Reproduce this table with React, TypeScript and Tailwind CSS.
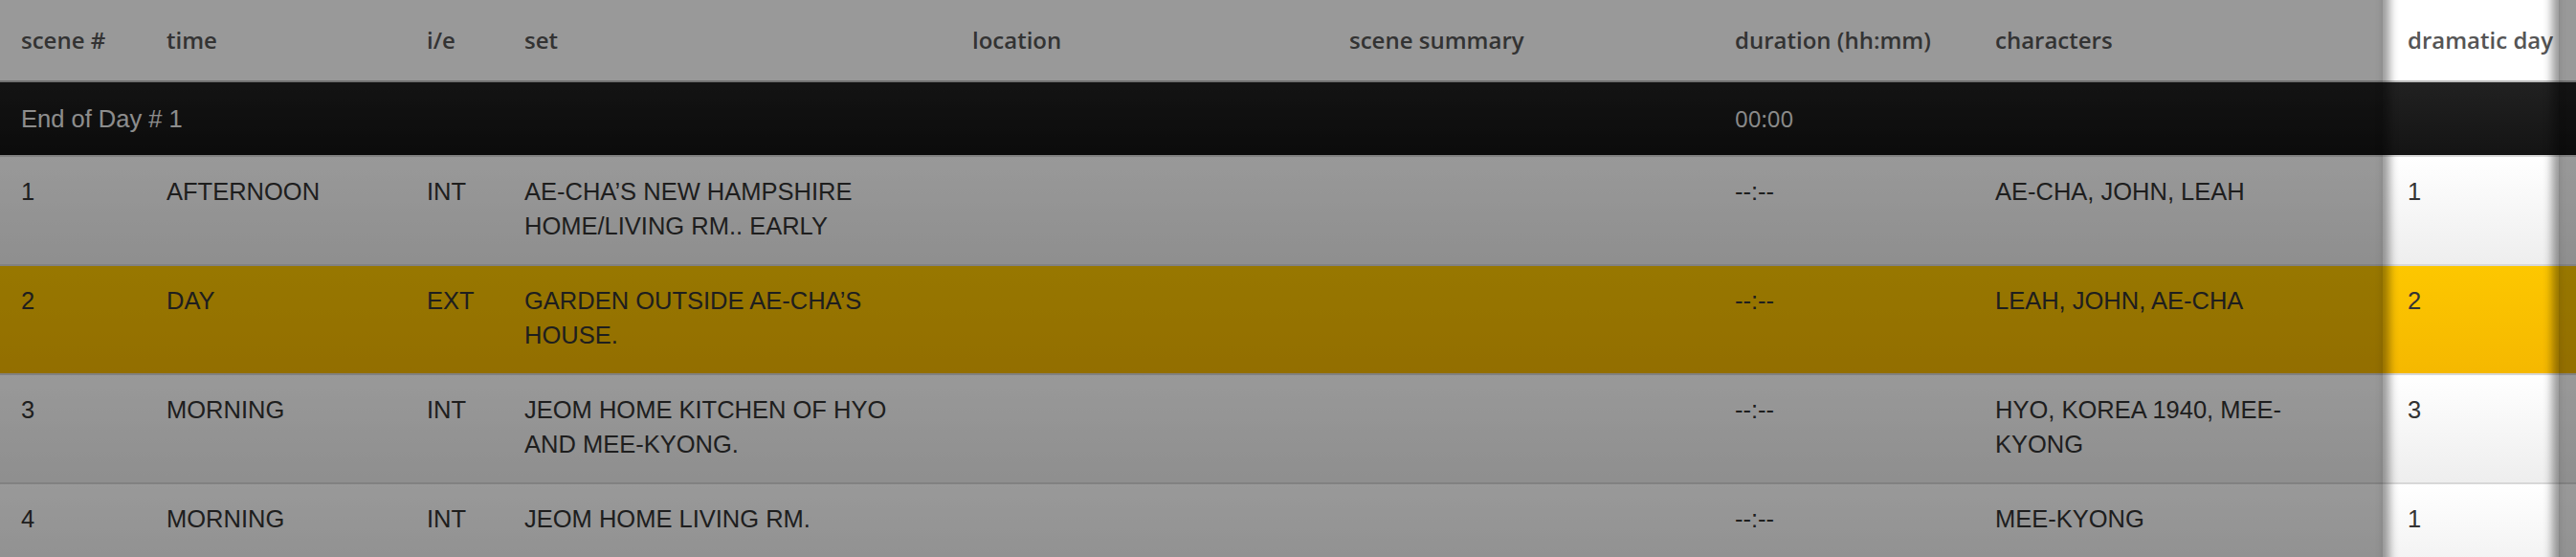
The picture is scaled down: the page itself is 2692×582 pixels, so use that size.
import React from "react";

const cols =
  "grid grid-cols-[152px_272px_102px_468px_394px_403px_272px_431px_1fr]";

const headers = [
  "scene #",
  "time",
  "i/e",
  "set",
  "location",
  "scene summary",
  "duration (hh:mm)",
  "characters",
  "dramatic day",
];

type Row = {
  cells: string[];
  yellow?: boolean;
};

const rows: Row[] = [
  {
    cells: [
      "1",
      "AFTERNOON",
      "INT",
      "AE-CHA’S NEW HAMPSHIRE HOME/LIVING RM.. EARLY",
      "",
      "",
      "--:--",
      "AE-CHA, JOHN, LEAH",
      "1",
    ],
  },
  {
    cells: [
      "2",
      "DAY",
      "EXT",
      "GARDEN OUTSIDE AE-CHA’S HOUSE.",
      "",
      "",
      "--:--",
      "LEAH, JOHN, AE-CHA",
      "2",
    ],
    yellow: true,
  },
  {
    cells: [
      "3",
      "MORNING",
      "INT",
      "JEOM HOME KITCHEN OF HYO AND MEE-KYONG.",
      "",
      "",
      "--:--",
      "HYO, KOREA 1940, MEE-KYONG",
      "3",
    ],
  },
  {
    cells: [
      "4",
      "MORNING",
      "INT",
      "JEOM HOME LIVING RM.",
      "",
      "",
      "--:--",
      "MEE-KYONG",
      "1",
    ],
  },
];

export default function App() {
  return (
    <div className="relative h-[582px] w-[2692px] overflow-hidden bg-white">
      {/* header */}
      <div
        className={`${cols} h-[86px] border-b-2 border-[#bdbdbd] bg-white font-['Open_Sans',sans-serif] text-[24px] font-semibold text-[#555]`}
      >
        {headers.map((h) => (
          <div key={h} className="flex items-center whitespace-nowrap px-[22px]">
            {h}
          </div>
        ))}
      </div>

      {/* end of day row */}
      <div
        className={`${cols} h-[78px] border-b-2 border-[#dadada] bg-linear-to-b from-[#212121] to-[#141414]`}
      >
        <div className="flex items-center whitespace-nowrap px-[22px] font-['Liberation_Sans',Arial,sans-serif] text-[25.5px] text-[#ececec]">
          End of Day # 1
        </div>
        <div />
        <div />
        <div />
        <div />
        <div />
        <div className="flex items-center px-[22px] font-['Open_Sans',sans-serif] text-[24px] text-[#e8e8e8]">
          00:00
        </div>
        <div />
        <div />
      </div>

      {/* body rows */}
      {rows.map((r, i) => (
        <div
          key={i}
          className={`${cols} h-[114px] border-b-2 border-[#d8d8d8] font-['Liberation_Sans',Arial,sans-serif] text-[25.5px] leading-[36px] text-[#333] ${
            r.yellow
              ? "bg-linear-to-b from-[#fdc700] to-[#f5b800]"
              : "bg-linear-to-b from-white to-[#eeeeee]"
          }`}
        >
          {r.cells.map((c, j) => (
            <div key={j} className="px-[22px] pt-[18px]">
              <div
                className={
                  j === 3 ? "max-w-[400px]" : j === 7 ? "max-w-[372px]" : ""
                }
              >
                {c}
              </div>
            </div>
          ))}
        </div>
      ))}

      {/* tour overlay with highlighted column */}
      <div className="pointer-events-none absolute top-[-40px] bottom-[-40px] left-[2490px] w-[184px] shadow-[inset_0_0_10px_7px_rgba(0,0,0,0.4),0_0_8px_rgba(0,0,0,0.15),0_0_0_9999px_rgba(0,0,0,0.4)]" />
    </div>
  );
}
